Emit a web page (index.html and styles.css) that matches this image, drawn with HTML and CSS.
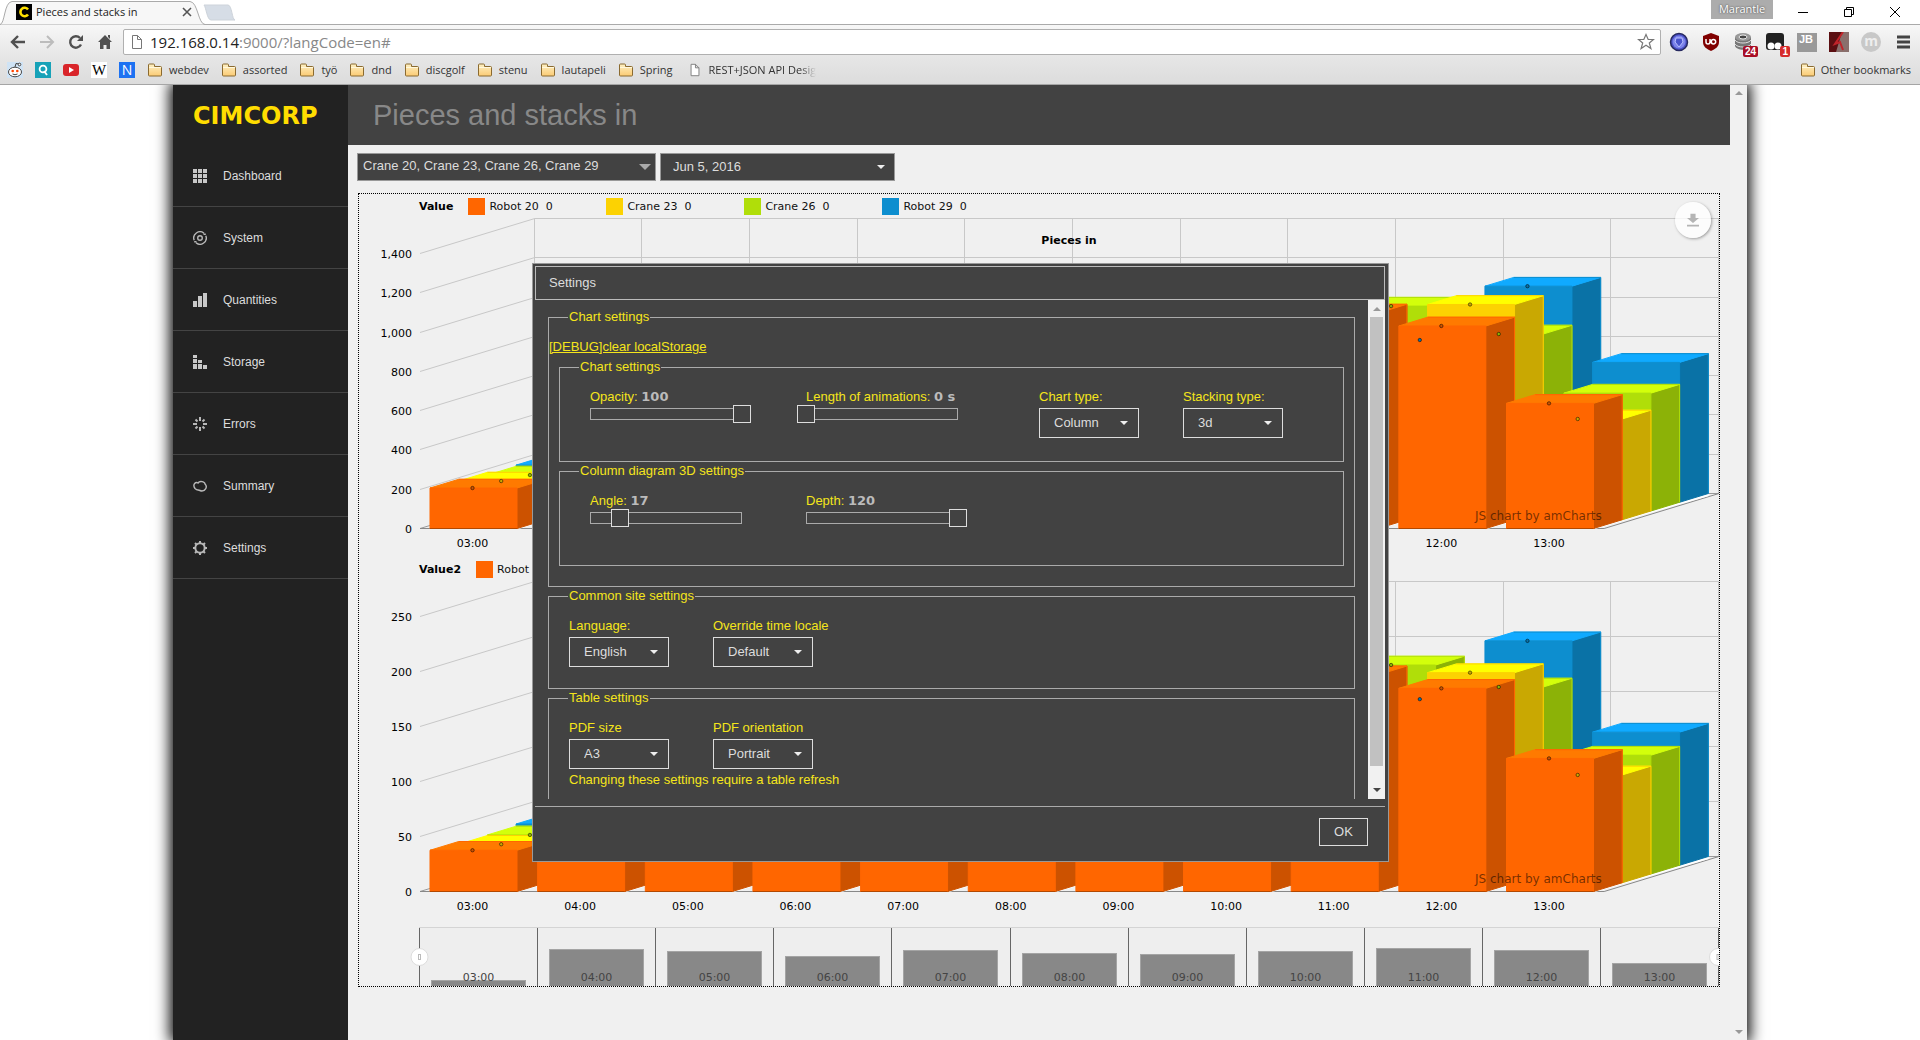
FILE: index.html
```html
<!DOCTYPE html>
<html lang="en">
<head>
<meta charset="utf-8">
<title>Pieces and stacks in</title>
<link rel="stylesheet" href="styles.css">
</head>
<body>
<svg class="defs" aria-hidden="true">
  <defs>
    <linearGradient id="folder-fill" x1="0" y1="0" x2="0" y2="1"><stop offset="0" stop-color="#fdf0c4"/><stop offset="1" stop-color="#fbcb74"/></linearGradient>
    <symbol id="folder" viewBox="0 0 16 14"><path d="M1.500 12V2q0-1 1-1h4q1 0 1 1v1.500h6q1 0 1 1V12q0 1-1 1h-11q-1 0-1-1z" fill="url(#folder-fill)" stroke="#8a6a30"/><path d="M2 4.500h12" stroke="#fff8dd"/></symbol>
    <symbol id="page" viewBox="0 0 12 16"><path d="M1.500 1.500h5l4 4v9h-9zM6.500 1.500v4h4" fill="#fff" stroke="#777"/></symbol>
  </defs>
</svg>

<header class="browser">
  <div class="tabstrip">
    <svg class="tab-shape" viewBox="0 0 236 25" width="236" height="25"><path d="M0 24.500C5 24 4 2 12 1.500h178c8 .5 8 22.500 15 23" fill="#f7f7f7" stroke="#aaa"/><path d="M204 5h24c4 0 4 15 7 15h-24c-4 0-5-13-7-15z" fill="#d6dde6" stroke="#cdd3da"/></svg>
    <div class="tab">
      <svg class="favicon" viewBox="0 0 16 16" width="16" height="16"><path d="M0 0h16v16H0z"/><path d="M12 5.500A4.200 4.200 0 1 0 12 10.500" fill="none" stroke="#ffe000" stroke-width="2.600"/></svg>
      <span class="tab-title">Pieces and stacks in</span>
      <button class="bare" aria-label="Close tab"><svg viewBox="0 0 10 10" width="10" height="10"><path d="M1 1l8 8M9 1l-8 8" stroke="#555" stroke-width="1.600"/></svg></button>
    </div>
    <div class="window-controls">
      <span class="profile">Marantle</span>
      <button class="bare" aria-label="Minimize"><svg viewBox="0 0 12 12" width="12" height="12"><path d="M1 6.500h10" stroke="#000"/></svg></button>
      <button class="bare" aria-label="Restore"><svg viewBox="0 0 12 12" width="12" height="12"><path d="M1.500 3.500h7v7h-7zM3.500 3.500v-2h7v7h-2" fill="none" stroke="#000"/></svg></button>
      <button class="bare" aria-label="Close"><svg viewBox="0 0 12 12" width="12" height="12"><path d="M1 1l10 10M11 1L1 11" stroke="#000"/></svg></button>
    </div>
  </div>
  <div class="toolbar">
    <button class="bare nav-btn" aria-label="Back"><svg viewBox="0 0 16 16" width="16" height="16"><path d="M15 8H2M8 2L2 8l6 6" fill="none" stroke="#505050" stroke-width="2.400"/></svg></button>
    <button class="bare nav-btn" aria-label="Forward"><svg viewBox="0 0 16 16" width="16" height="16"><path d="M1 8h13M8 2l6 6-6 6" fill="none" stroke="#bcbcbc" stroke-width="2"/></svg></button>
    <button class="bare nav-btn" aria-label="Reload"><svg viewBox="0 0 16 16" width="16" height="16"><path d="M13 10.500A5.700 5.700 0 1 1 12 4" fill="none" stroke="#505050" stroke-width="2.400"/><path d="M15 1v6H9z" fill="#505050"/></svg></button>
    <button class="bare nav-btn" aria-label="Home"><svg viewBox="0 0 16 16" width="16" height="16"><path d="M8 1l7 7h-2v7H9.500v-4h-3v4H3V8H1zM11 1h2v4l-2-2z" fill="#505050"/></svg></button>
    <div class="omnibox">
      <svg viewBox="0 0 12 16" width="12" height="16"><use href="#page"/></svg>
      <span class="url">192.168.0.14<span class="url-rest">:9000/?langCode=en#</span></span>
      <svg viewBox="0 0 18 18" width="18" height="18"><path d="M9 1.500l2.200 5h5.300l-4.200 3.500 1.600 5.500L9 12.300l-4.900 3.200 1.600-5.500L1.500 6.500h5.300z" fill="#fff" stroke="#777" stroke-width="1.200"/></svg>
    </div>
    <div class="extensions">
      <svg viewBox="0 0 20 20"><circle cx="10" cy="10" r="8.500" fill="#4a50c8" stroke="#26295f" stroke-width="1.500"/><circle cx="10" cy="10" r="6.500" fill="#7d84ea"/><path d="M7 6l6 0 1 4-4 5-4-5z" fill="#4a55cc" stroke="#b9c0ff"/></svg>
      <svg viewBox="0 0 20 20"><path d="M10 1l8 3v6c0 5-4 7-8 9-4-2-8-4-8-9V4z" fill="#800000"/><path d="M5 7v3q0 2 2 2t2-2V7M12.500 7.500a2.200 2.200 0 1 1 0 4.400 2.200 2.200 0 0 1 0-4.400z" fill="none" stroke="#fff" stroke-width="1.500"/></svg>
      <span class="badged"><svg viewBox="0 0 20 20"><path d="M2 5v9c2 5 14 5 16 0V5z" fill="#777"/><path d="M2 8c2 4 14 4 16 0M2 12c2 4 14 4 16 0" fill="none" stroke="#ddd"/><ellipse cx="10" cy="5" rx="8" ry="4" fill="#999"/><ellipse cx="10" cy="5" rx="4" ry="2" fill="#444" stroke="#eee"/></svg><b class="badge dark">24</b></span>
      <span class="badged"><svg viewBox="0 0 20 20"><rect x="1" y="1" width="18" height="17" rx="3" fill="#222"/><circle cx="6" cy="14" r="3.500" fill="#fff"/><circle cx="13" cy="14" r="3.500" fill="#fff"/></svg><b class="badge">1</b></span>
      <span class="jb">JB</span>
      <svg viewBox="0 0 20 20"><path d="M0 0h20v20H0z" fill="#8a6f6c"/><path d="M0 0h13L7 20H0z" fill="#5b0f12"/><path d="M14 0L6 12l5-2 3 8" fill="none" stroke="#c0242a" stroke-width="2"/></svg>
      <span class="round-m">m</span>
      <svg viewBox="0 0 20 20"><path d="M4 5h13M4 10h13M4 15h13" stroke="#444" stroke-width="3"/></svg>
    </div>
  </div>
  <nav class="bookmarks" aria-label="Bookmarks">
    <svg class="site" viewBox="0 0 16 16"><path d="M0 0h16v16H0z" fill="#cfe3f5"/><ellipse cx="8" cy="10" rx="6.500" ry="4.800" fill="#fff" stroke="#444"/><circle cx="5.700" cy="9" r="1.300" fill="#f40"/><circle cx="10.300" cy="9" r="1.300" fill="#f40"/><path d="M5.500 12q2.500 1.500 5 0M8 5l1-3.500 3 .5" fill="none" stroke="#444"/><circle cx="12.500" cy="2.500" r="1.300" fill="#fff" stroke="#444"/></svg>
    <svg class="site" viewBox="0 0 16 16"><path d="M0 0h16v16H0z" fill="#17a2b8"/><circle cx="8" cy="7" r="3.400" fill="none" stroke="#fff" stroke-width="1.800"/><path d="M9 9l3 4" stroke="#fff" stroke-width="1.800"/></svg>
    <svg class="site" viewBox="0 0 16 16"><rect y="2" width="16" height="12" rx="3" fill="#d9252a"/><path d="M6 5l5 3-5 3z" fill="#fff"/></svg>
    <span class="site wiki">W</span>
    <span class="site novus">N</span>
    <a class="bm" href="#"><svg viewBox="0 0 16 14"><use href="#folder"/></svg>webdev</a>
    <a class="bm" href="#"><svg viewBox="0 0 16 14"><use href="#folder"/></svg>assorted</a>
    <a class="bm" href="#"><svg viewBox="0 0 16 14"><use href="#folder"/></svg>työ</a>
    <a class="bm" href="#"><svg viewBox="0 0 16 14"><use href="#folder"/></svg>dnd</a>
    <a class="bm" href="#"><svg viewBox="0 0 16 14"><use href="#folder"/></svg>discgolf</a>
    <a class="bm" href="#"><svg viewBox="0 0 16 14"><use href="#folder"/></svg>stenu</a>
    <a class="bm" href="#"><svg viewBox="0 0 16 14"><use href="#folder"/></svg>lautapeli</a>
    <a class="bm" href="#"><svg viewBox="0 0 16 14"><use href="#folder"/></svg>Spring</a>
    <a class="bm fade" href="#"><svg viewBox="0 0 12 16"><use href="#page"/></svg>REST+JSON API Desig</a>
    <a class="bm other" href="#"><svg viewBox="0 0 16 14"><use href="#folder"/></svg>Other bookmarks</a>
  </nav>
</header>

<div class="shell">
  <aside class="sidebar">
    <div class="logo">CIMCORP</div>
    <nav aria-label="Main">
      <a class="item" href="#"><svg viewBox="0 0 14 14"><path d="M0 0h4v4H0zM5 0h4v4H5zM10 0h4v4h-4zM0 5h4v4H0zM5 5h4v4H5zM10 5h4v4h-4zM0 10h4v4H0zM5 10h4v4H5zM10 10h4v4h-4z"/></svg>Dashboard</a>
      <a class="item" href="#"><svg class="line" viewBox="0 0 14 14"><circle cx="7" cy="7" r="2.300"/><path d="M1.200 9.300A6.200 6.200 0 0 1 11 2.300M12.800 4.700A6.200 6.200 0 0 1 3 11.700M10.500 3.200h2.300M3.500 10.800H1.200"/></svg>System</a>
      <a class="item" href="#"><svg viewBox="0 0 14 14"><path d="M0 8h4v6H0zM5 3h4v11H5zM10 0h4v14h-4z"/></svg>Quantities</a>
      <a class="item" href="#"><svg viewBox="0 0 14 14"><path d="M0 0h4v3H0zM0 4h4v4H0zM5 5h4v3H5zM0 9h4v5H0zM5 9h4v5H5zM10 10h4v4h-4z"/></svg>Storage</a>
      <a class="item" href="#"><svg class="line thick" viewBox="0 0 14 14"><path d="M7 0v4M7 10v4M0 7h4M10 7h4M2.500 2.500l2 2M9.500 9.500l2 2M11.500 2.500l-2 2M4.500 9.500l-2 2"/></svg>Errors</a>
      <a class="item" href="#"><svg class="line" viewBox="0 0 14 14"><path d="M2 9.500C-1 5 3 2.500 5 4c2-3 7-1 7 1 3 3 0 7-3 7-2 0-2-1-4-1-1.500 0-2-.5-3-1.500z"/></svg>Summary</a>
      <a class="item" href="#"><svg class="line thick" viewBox="0 0 14 14"><circle cx="7" cy="7" r="4.700"/><path d="M7 0v2M7 12v2M0 7h2M12 7h2M2 2l1.500 1.500M10.500 10.500L12 12M12 2l-1.500 1.500M3.500 10.500L2 12"/></svg>Settings</a>
    </nav>
  </aside>
  <div class="content">
    <header class="title-bar"><h1>Pieces and stacks in</h1></header>
    <main>
      <div class="filters">
        <span class="picker cranes"><select aria-label="Cranes"><option>Crane 20, Crane 23, Crane 26, Crane 29</option></select></span>
        <span class="picker date"><select aria-label="Date"><option>Jun 5, 2016</option></select></span>
      </div>
      <section class="charts">
        <div class="legend-row"><b>Value</b>
          <span class="key orange">Robot 20&nbsp; 0</span><span class="key yellow">Crane 23&nbsp; 0</span><span class="key green">Crane 26&nbsp; 0</span><span class="key blue">Robot 29&nbsp; 0</span></div>
        <svg class="plot" id="pieces" viewBox="359 216 1360 341"></svg>
        <div class="legend-row"><b>Value2</b>
          <span class="key orange">Robot 20&nbsp; 0</span><span class="key yellow">Crane 23&nbsp; 0</span><span class="key green">Crane 26&nbsp; 0</span><span class="key blue">Robot 29&nbsp; 0</span></div>
        <svg class="plot" id="stacks" viewBox="359 579 1360 347"></svg>
        <svg class="plot" id="range" viewBox="359 926 1360 60"></svg>
        <button class="export" aria-label="Download"><svg viewBox="0 0 14 16" width="12" height="15"><path d="M4 0h6v5h4L7 11 0 5h4zM0 13h14v2H0z" fill="#b4b4b4"/></svg></button>
      </section>
    </main>
  </div>
  <div class="page-scroll"><i class="up"></i><i class="down"></i></div>
</div>

<section class="dialog" role="dialog" aria-labelledby="dialog-title">
  <h2 id="dialog-title">Settings</h2>
  <div class="dialog-body">
    <form class="settings">
      <fieldset class="outer">
        <legend>Chart settings</legend>
        <a class="debug" href="#">[DEBUG]clear localStorage</a>
        <fieldset class="inner">
          <legend>Chart settings</legend>
          <div class="fields">
            <div class="slider"><label for="opacity">Opacity: <output>100</output></label><input id="opacity" type="range" min="0" max="100" value="100"></div>
            <div class="slider"><label for="anim">Length of animations: <output>0 s</output></label><input id="anim" type="range" min="0" max="10" value="0"></div>
            <div class="choice"><label for="ctype">Chart type:</label><span class="picker"><select id="ctype"><option>Column</option></select></span></div>
            <div class="choice"><label for="stack">Stacking type:</label><span class="picker"><select id="stack"><option>3d</option></select></span></div>
          </div>
        </fieldset>
        <fieldset class="inner">
          <legend>Column diagram 3D settings</legend>
          <div class="fields">
            <div class="slider"><label for="angle">Angle: <output>17</output></label><input id="angle" type="range" min="0" max="85" value="17"></div>
            <div class="slider"><label for="depth">Depth: <output>120</output></label><input id="depth" type="range" min="0" max="120" value="120"></div>
          </div>
        </fieldset>
      </fieldset>
      <fieldset class="plain">
        <legend>Common site settings</legend>
        <div class="fields">
          <div class="choice"><label for="lang">Language:</label><span class="picker"><select id="lang"><option>English</option></select></span></div>
          <div class="choice"><label for="locale">Override time locale</label><span class="picker"><select id="locale"><option>Default</option></select></span></div>
        </div>
      </fieldset>
      <fieldset class="plain">
        <legend>Table settings</legend>
        <div class="fields table-fields">
          <div class="choice"><label for="psize">PDF size</label><span class="picker"><select id="psize"><option>A3</option></select></span></div>
          <div class="choice"><label for="porient">PDF orientation</label><span class="picker"><select id="porient"><option>Portrait</option></select></span></div>
        </div>
        <p class="note">Changing these settings require a table refresh</p>
      </fieldset>
    </form>
    <div class="dialog-scroll"><i class="up"></i><i class="thumb"></i><i class="down"></i></div>
  </div>
  <footer><button class="ok">OK</button></footer>
</section>
<script src="chart.js"></script>
</body>
</html>
```
FILE: styles.css
```css
* { box-sizing: border-box; }
body { margin: 0; height: 100vh; display: flex; flex-direction: column; overflow: hidden; background: #fff; font: 13px/16px "Liberation Sans", Arial, sans-serif; position: relative; }
button, select, input { font: inherit; margin: 0; }
.defs { position: absolute; width: 0; height: 0; }
.bare { border: 0; background: none; padding: 0; display: flex; align-items: center; justify-content: center; }

/* browser frame */
.browser { flex: none; position: relative; z-index: 1; font: 12px/16px "Open Sans", "Noto Sans", sans-serif; color: #222; border-bottom: 1px solid #a5a5a5; background: #e0e0e0; }
.tabstrip { position: relative; height: 25px; display: flex; justify-content: space-between; background: #fff; border-bottom: 1px solid #aaa; }
.tab-shape { position: absolute; left: 0; top: 0; }
.tab { position: relative; display: flex; align-items: center; width: 192px; padding-left: 16px; }
.favicon { margin-right: 4px; }
.tab-title { flex: 1; font-size: 11px; }
.window-controls { display: flex; align-items: center; gap: 34px; padding-right: 19px; }
.profile { align-self: flex-start; width: 62px; height: 19px; margin-right: -10px; background: #acacac; color: #fff; text-align: center; text-shadow: 0 0 2px #333; font-size: 11px; line-height: 18px; }
.toolbar { height: 32px; display: flex; align-items: center; padding: 4px 7px 2px 3px; background: linear-gradient(#f7f7f7, #e6e6e6); }
.nav-btn { width: 29px; }
.omnibox { flex: 1; height: 26px; display: flex; align-items: center; gap: 7px; margin: 0 8px 0 4px; padding: 0 5px 0 7px; border: 1px solid #b0b0b0; border-radius: 2px; background: #fff; }
.url { flex: 1; font-size: 15px; }
.url-rest { color: #888; }
.extensions { display: flex; align-items: center; gap: 12px; }
.extensions svg { display: block; width: 20px; height: 20px; }
.badged { position: relative; }
.badge { position: absolute; right: -5px; bottom: -5px; padding: 0 2px; border-radius: 2px; background: #d62b2b; color: #fff; font: bold 10px/11px "Liberation Sans", sans-serif; }
.badge.dark { background: #a80d25; }
.jb { width: 20px; height: 19px; padding-left: 2px; background: #999; color: #fff; font: bold 11px/13px "Liberation Sans", sans-serif; }
.round-m { width: 20px; height: 20px; border-radius: 50%; background: #c8c8c8; color: #eee; text-align: center; font: bold 14px/18px "Open Sans", sans-serif; }
.bookmarks { height: 27px; display: flex; align-items: center; padding: 0 9px 2px 7px; background: linear-gradient(#e6e6e6, #dcdcdc); font-size: 11px; }
.site { flex: none; width: 16px; height: 16px; margin-right: 12px; text-align: center; }
.wiki { background: #fff; font: 15px/16px "Liberation Serif", serif; color: #000; }
.novus { background: #1d72f2; color: #fff; font: 14px/16px "Open Sans", sans-serif; }
.bm { display: flex; align-items: center; gap: 6px; margin: 0 12px 0 0; color: #333; text-decoration: none; white-space: nowrap; }
.bm svg { width: 16px; height: 14px; }
.bm.fade { margin-left: 2px; mask-image: linear-gradient(90deg, #000 88%, transparent); }
.bm.other { margin: 0 0 0 auto; gap: 5px; }

/* application shell */
.shell { flex: 1; min-height: 0; display: flex; margin: 0 173px; background: #f0f0f0; box-shadow: 0 0 14px 3px #000; }
.sidebar { flex: none; width: 175px; background: #222; }
.logo { height: 60px; padding: 18px 0 0 20px; color: #fd0; font: bold 24px/26px "DejaVu Sans", Verdana, sans-serif; }
.item { display: flex; align-items: center; gap: 16px; height: 62px; padding-left: 20px; border-bottom: 1px solid #444; color: #ddd; font-size: 12px; text-decoration: none; }
.item svg { width: 14px; height: 14px; fill: #c8c8c8; }
.item .line { fill: none; stroke: #b8b8b8; stroke-width: 1.4; }
.item .thick { stroke-width: 2; }
.content { flex: 1; min-width: 0; }
.title-bar { height: 60px; padding: 0 25px; background: #424242; display: flex; align-items: center; }
h1 { margin: 0; font-size: 29px; line-height: 34px; font-weight: normal; color: #888; }
main { padding: 8px 10px 8px 9px; }
.filters { display: flex; gap: 4px; margin-bottom: 12px; }
.page-scroll { flex: none; width: 17px; display: flex; flex-direction: column; justify-content: space-between; align-items: center; padding: 6px 0; background: #f1f1f1; }
.up, .down { flex: none; width: 0; height: 0; border: 4px solid transparent; }
.up { border-bottom-color: #999; border-top: 0; }
.down { border-top-color: #999; border-bottom: 0; }

/* drop-downs */
.picker { position: relative; display: block; }
.picker select { appearance: none; display: block; width: 100%; height: 30px; padding: 0 14px; border: 1px solid #ddd; border-radius: 0; background: #424242; color: #ddd; }
.picker::after { content: ""; position: absolute; right: 11px; top: 13px; border: 4px solid transparent; border-top-color: #eee; border-bottom: 0; pointer-events: none; }
.filters .picker select { height: 28px; padding: 0 12px; border-color: #999; }
.cranes { width: 299px; }
.filters .cranes select { padding: 0 5px 3px; }
.cranes::after { right: 5px; top: 11px; border-width: 6px; border-top-color: #aaa; border-bottom: 0; }
.date { width: 235px; }
.date::after { right: 10px; top: 12px; }

/* charts */
.charts { position: relative; margin-left: 1px; border: 1px dotted #000; font: 11px/17px "DejaVu Sans", Verdana, sans-serif; }
.legend-row { display: flex; padding: 4px 0 1px 60px; color: #000; }
.legend-row b { margin-right: 15px; }
.key { display: flex; width: 138px; -webkit-text-fill-color: #111; }
.key::before { content: ""; width: 17px; height: 17px; margin-right: 4px; background: currentColor; }
.orange { color: #f60; }
.yellow { color: #fcd202; }
.green { color: #b0de09; }
.blue { color: #0d8ecf; }
.plot { display: block; width: 100%; overflow: hidden; }
.plot text { font: 11px "DejaVu Sans", Verdana, sans-serif; }
.plot .heading { font-weight: bold; }
.plot .credit { font-size: 12px; }
.export { position: absolute; right: 8px; top: 8px; width: 36px; height: 36px; padding: 0; border: 0; border-radius: 50%; background: rgba(255, 255, 255, .8); box-shadow: 1px 1px 3px rgba(0, 0, 0, .35); display: flex; align-items: center; justify-content: center; }

/* settings dialog */
.dialog { position: absolute; z-index: 2; left: 50%; top: 263px; width: 857px; margin-left: -428px; padding: 2px 3px 2px 2px; border: 1px solid #999; background: #424242; color: #ddd; }
h2 { margin: 0; padding: 8px 13px; border: 1px solid #bbb; font-size: 13px; line-height: 16px; font-weight: normal; }
.dialog-body { display: flex; height: 499px; overflow: hidden; }
.settings { flex: 1; min-width: 0; padding: 9px 13px 0; color: #f5e51b; }
fieldset { min-width: 0; margin: 0 0 1px; padding: 0; border: 1px solid #aaa; }
legend { padding: 0 1px; }
.outer { padding: 14px 10px 19px; }
.outer > legend { margin-left: 9px; }
.debug { display: block; width: max-content; margin-left: -10px; color: inherit; }
.inner { margin-top: 4px; padding: 14px 0 0 30px; }
.inner + .inner { margin-top: 0; }
.inner > legend { margin-left: -11px; }
.plain { padding: 14px 20px 0; }
.plain > legend { margin-left: -1px; }
.fields { display: flex; min-height: 72px; }
.plain .fields { min-height: 70px; }
.plain .table-fields { min-height: 52px; }
.note { margin: 0; padding-bottom: 24px; }
.fields label { display: block; margin-bottom: 3px; white-space: nowrap; }
.choice { flex: none; width: 144px; }
.choice .picker { width: 100px; }
.slider { flex: none; width: 216px; }
.slider + .choice { margin-left: 17px; }
.slider output { color: #bbb; font: bold 13px/16px "DejaVu Sans", Verdana, sans-serif; }
input[type=range] { appearance: none; display: block; width: 170px; height: 12px; margin-left: -9px; background: none; }
input[type=range]::-webkit-slider-runnable-track { height: 12px; background: linear-gradient(#424242, #424242) 10px 1px / 150px 10px no-repeat, linear-gradient(#aaa, #aaa) 9px 0 / 152px 12px no-repeat; }
input[type=range]::-webkit-slider-thumb { appearance: none; width: 18px; height: 18px; margin-top: -3px; border: 1px solid #ddd; background: #424242; }
.dialog-scroll { flex: none; width: 17px; display: flex; flex-direction: column; align-items: center; padding: 7px 0; background: #f1f1f1; }
.dialog-scroll .thumb { width: 13px; flex: 1; margin: 6px 0 22px; background: #c1c1c1; }
.dialog-scroll .down { border-top-color: #444; }
.dialog footer { display: flex; justify-content: flex-end; margin-top: 7px; padding: 11px 17px 13px; border-top: 1px solid #aaa; }
.ok { width: 49px; height: 28px; padding: 0; border: 1px solid #ddd; background: #424242; color: #ddd; }
```
FILE: chart.js
```js
const HOURS = ['03:00','04:00','05:00','06:00','07:00','08:00','09:00','10:00','11:00','12:00','13:00'];
const LEFT = 420, STEP = 107.65, BAR = 87, DX = 114.8, DY = 35, PLOT_W = STEP * 11;
// front, top and side colour of each series, nearest first
const COLORS = [['#ff6600','#ff7a00','#cc5200'],['#fcd202','#ffff00','#c9a802'],['#b0de09','#d3ff0b','#8cb207'],['#0d8ecf','#10aaff','#0a72a6']];
const line = (x1, y1, x2, y2, c, w) => `<path d="M${x1} ${y1}L${x2} ${y2}" stroke="${c}" stroke-width="${w || 1}" fill="none"/>`;
const poly = (pts, c, s) => `<polygon points="${pts.join(' ')}" fill="${c}" stroke="${s || c}" stroke-width="1"/>`;
const label = (x, y, t, anchor, extra) => `<text x="${x}" y="${y}" text-anchor="${anchor}" ${extra || ''}>${t}</text>`;

function draw(id, base, unit, step, max, data, heading) {
  let out = '';
  const format = v => v.toLocaleString('en-US');
  for (let v = 0; v <= max; v += step) {
    const y = Math.round(base - v * unit - .5) + .5, c = v ? '#c8c8c8' : '#999';
    out += line(LEFT, y, LEFT + DX, y - DY, c) + line(LEFT + DX, y - DY, 1719, y - DY, c);
    out += label(412, y + 4, format(v), 'end');
  }
  const top = Math.round(base - max * unit - .5) + .5 - DY;
  for (let k = 0; k <= 11; k++) {
    const x = Math.min(1718.5, Math.round(LEFT + DX + k * STEP) - .5);
    out += line(x, top, x, base - DY, '#c8c8c8');
  }
  out += line(LEFT, base, LEFT + PLOT_W, base, '#888') + line(LEFT + PLOT_W, base, LEFT + PLOT_W + DX, base - DY, '#888');
  if (heading) out += label(1069, 244, heading, 'middle', 'class="heading"');
  let dots = '';
  data.forEach((row, k) => {
    const fx = LEFT + 10 + k * STEP;
    out += line(fx + BAR + 1, base - 1, fx + BAR + DX, base - DY + 1, '#fff', 3);
    for (let s = 3; s >= 0; s--) {
      const x = fx + s * DX / 4, b = base - s * DY / 4, t = b - row[s] * unit, r = x + BAR, dx = DX / 4, dy = DY / 4;
      const [front, cap, side] = COLORS[s];
      out += poly([[r, b], [r + dx, b - dy], [r + dx, t - dy], [r, t]], side);
      out += line(r + dx, b - dy, r + dx, t - dy, front);
      out += poly([[x, t], [x + dx, t - dy], [r + dx, t - dy], [r, t]], cap);
      out += poly([[x, b], [r, b], [r, t], [x, t]], front);
      out += line(x + dx, t - dy, r + dx, t - dy, front);
      const shown = !(k === 10 && s > 1);
      if (shown) dots += `<circle cx="${x + BAR / 2 - 1}" cy="${t}" r="1.7" fill="${side}" stroke="#000" stroke-opacity=".5"/>`;
    }
    out += line(fx, base, fx + BAR, base, '#b34800');
  });
  out += dots;
  HOURS.forEach((h, k) => { out += label(LEFT + 52.500 + k * STEP, base + 18.500, h, 'middle'); });
  out += label(1475, base - 8.500, 'JS chart by amCharts', 'start', 'class="credit" fill-opacity=".55"');
  document.getElementById(id).innerHTML = out;
}

draw('pieces', 528.5, 0.19643, 200, 1400, [
  [206,197,183,189],[1000,900,950,980],[980,900,940,970],[900,850,880,900],[990,900,950,980],[960,880,900,950],
  [940,880,900,940],[980,900,950,970],[1097,880,1043,826],[1031,1096,901,1100],[637,513,600,712]
], 'Pieces in');
draw('stacks', 891.5, 1.1, 50, 250, [
  [37.5,35,35.5,37.5],[180,170,170,175],[178,170,170,172],[165,160,160,162],[180,170,170,175],[170,165,165,170],
  [168,165,165,168],[178,170,170,172],[197,165,190,151],[184.7,191,170,204],[121,98,108,121]
]);

(function drawRange() {
  const tops = [980,949,951,956,950,953,954,951,948,950,963], pitch = 118.1;
  let out = '<rect x="419" y="927" width="1300" height="60" fill="#eee"/>' + line(419, 927.5, 1719, 927.5, '#d4d4d4');
  tops.forEach((t, k) => {
    const x = Math.round(419 + k * pitch) + .5;
    out += line(x, 928, x, 987, '#666');
    out += `<rect x="${x + 12}" y="${t + .5}" width="94" height="40" fill="#888" stroke="#a4a4a4"/>`;
    out += label(x + 59, 981, HOURS[k], 'middle', 'fill="#444"');
  });
  out += line(1718.5, 928, 1718.5, 987, '#666');
  [419.5, 1718].forEach(x => {
    out += `<circle cx="${x}" cy="957" r="8.500" fill="#fff" stroke="#ddd"/><rect x="${x - 1}" y="954.500" width="2" height="5" fill="none" stroke="#bbb"/>`;
  });
  document.getElementById('range').innerHTML = out;
})();
```
